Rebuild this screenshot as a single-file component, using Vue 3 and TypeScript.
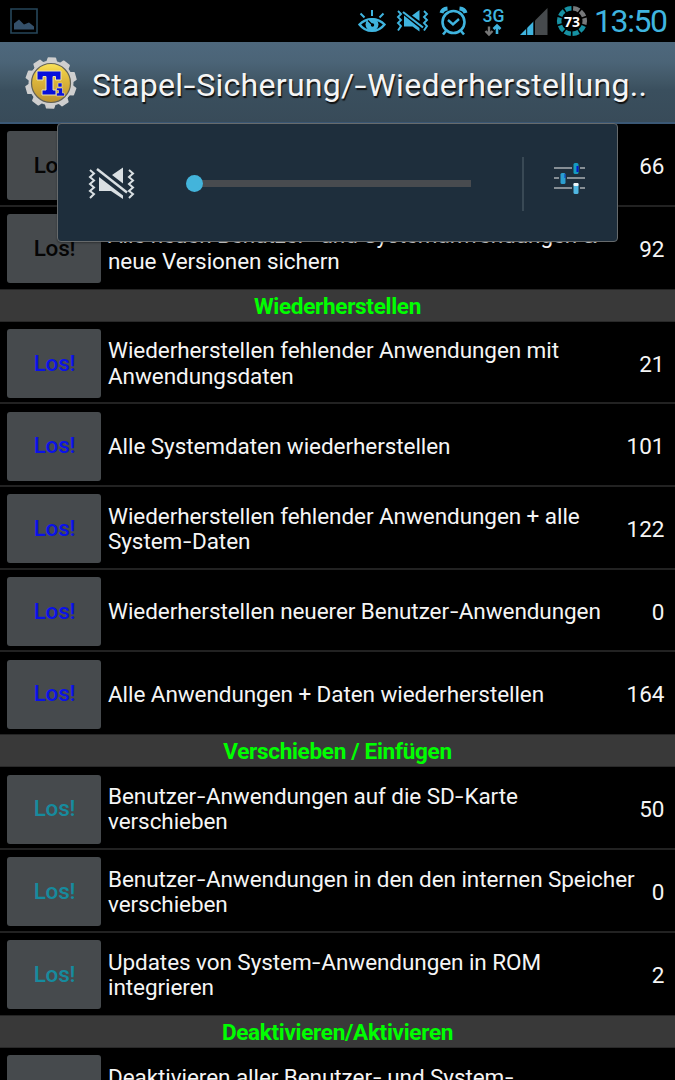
<script setup lang="ts">
interface Item { lines: string[]; count: string; tone: string }
interface Section { title: string; items: Item[] }

const item = (tone: string, count: string, ...lines: string[]): Item => ({ tone, count, lines })

const sections: Section[] = [
  {
    title: '',
    items: [
      item('black', '66', ''),
      item('black', '92', 'Alle neuen Benutzer- und Systemanwendungen &', 'neue Versionen sichern'),
    ],
  },
  {
    title: 'Wiederherstellen',
    items: [
      item('blue', '21', 'Wiederherstellen fehlender Anwendungen mit', 'Anwendungsdaten'),
      item('blue', '101', 'Alle Systemdaten wiederherstellen'),
      item('blue', '122', 'Wiederherstellen fehlender Anwendungen + alle', 'System-Daten'),
      item('blue', '0', 'Wiederherstellen neuerer Benutzer-Anwendungen'),
      item('blue', '164', 'Alle Anwendungen + Daten wiederherstellen'),
    ],
  },
  {
    title: 'Verschieben / Einfügen',
    items: [
      item('teal', '50', 'Benutzer-Anwendungen auf die SD-Karte', 'verschieben'),
      item('teal', '0', 'Benutzer-Anwendungen in den den internen Speicher', 'verschieben'),
      item('teal', '2', 'Updates von System-Anwendungen in ROM', 'integrieren'),
    ],
  },
  {
    title: 'Deaktivieren/Aktivieren',
    items: [item('black', '', 'Deaktivieren aller Benutzer- und System-', 'Anwendungen')],
  },
]

// Split on hyphens so that each one can be drawn wider than the font's own glyph
const pieces = (line: string): string[] => line.split(/(-)/).filter((p) => p !== '')
const teeth = Array.from({ length: 10 }, (_, i) => i * 36 + 2)
const segments = Array.from({ length: 10 }, (_, i) => i)
</script>

<template>
  <div class="screen">
    <header class="status">
      <svg class="picture" width="28" height="26" viewBox="0 0 28 26">
        <path d="M1 1h26v24H1z" fill="none" stroke="#26465a" stroke-width="1.6" />
        <path d="M4 21.500v-6l5-4 5 5 5-2 5 4v3z" fill="#34506a" />
      </svg>
      <svg class="tray" width="325" height="42" viewBox="350 0 325 42">
        <g fill="none" stroke="#3fb4df" stroke-width="2">
          <path d="M359.500 24.500C366 17.500 378 17.500 384.500 24.500C378 33 366 33 359.500 24.500Z" stroke-width="2.400" />
          <path d="M372 10v6M360.500 13.500l4 4M383.500 13.500l-4 4" />
          <circle cx="372" cy="24.500" r="6.500" fill="#3fb4df" stroke="none" />
          <path d="M368 20.500l4 4" stroke="#000" stroke-width="1.300" />
          <circle cx="372.500" cy="25" r="1.700" fill="#000" stroke="none" />
        </g>
        <g fill="none" stroke="#3fb4df" stroke-width="1.900">
          <path d="M398 11l3 3-3 3 3 3-3 3 3 3-3 4.500M424 11l3 3-3 3 3 3-3 3 3 3-3 4.500" />
          <path d="M403 12l20 15.500" stroke-width="2.200" />
          <path d="M419.500 10v11l-7.500-5.500zM404 15.500l15.500 12.500v3.500l-7-5H404z" fill="#3fb4df" stroke="none" />
        </g>
        <g fill="none" stroke="#3fb4df" stroke-width="2.600">
          <circle cx="453.500" cy="22" r="11" />
          <path d="M448 20l5 4.500 6-5.500" stroke-width="2.400" />
          <path d="M441.500 13q1-4 6-4.500M459.500 8.500q5 .5 6 4.500" stroke-width="4" />
          <path d="M446 31l-3 3.500M461 31l3 3.500" />
        </g>
        <text x="482.500" y="22" class="net" textLength="22" lengthAdjust="spacingAndGlyphs">3G</text>
        <path d="M489 26.500v8M485.500 31l3.500 3.500 3.500-3.500" fill="none" stroke="#777" stroke-width="2.400" />
        <path d="M497 34v-8M493.500 29l3.500-3.500 3.500 3.500" fill="none" stroke="#3fb4df" stroke-width="2.600" />
        <path d="M520 35l14-14v14z" fill="#3fb4df" />
        <path d="M535 20.500l12.500-12.500v27H535z" fill="#464a4d" />
        <path d="M526.700 25v10M533.800 19v16" stroke="#000" stroke-width="1" />
        <g fill="none" stroke-width="4.500">
          <circle v-for="n in segments" :key="n" cx="572" cy="21" r="12.800" pathLength="100" stroke-dasharray="8 92" :stroke="n < 3 ? '#77797b' : '#1691a3'" :transform="`rotate(${n * 36 - 85} 572 21)`" />
        </g>
        <text x="572" y="27" class="battery" text-anchor="middle">73</text>
        <text x="594" y="31.500" class="clock" textLength="74" lengthAdjust="spacing">13:50</text>
      </svg>
    </header>

    <div class="titlebar">
      <svg class="logo" width="54" height="54" viewBox="-27 -27 54 54">
        <defs>
          <linearGradient id="gold" x1="0" y1="0" x2="0" y2="1">
            <stop offset="0" stop-color="#f9e35c" />
            <stop offset=".2" stop-color="#eccb43" />
            <stop offset=".5" stop-color="#d9b23a" />
            <stop offset="1" stop-color="#ba9130" />
          </linearGradient>
        </defs>
        <g fill="#cfcfcf" stroke="#cfcfcf" stroke-linejoin="round">
          <path v-for="a in teeth" :key="a" d="M-5-20l1.500-5h7l1.500 5z" :transform="`rotate(${a})`" stroke-width="1.500" />
          <circle r="22" />
        </g>
        <circle r="19.500" fill="url(#gold)" stroke="#626257" stroke-width="1.200" />
        <path d="M-14-12H10V-3H4.500v-3.500H2V7h3v5H-9V7h4V-6.500h-3V-3h-6z" fill="#0810dc" stroke="#eee4ac" stroke-width="1" />
        <path d="M7 0h4v4H7zM5.500 5h6v5h2v3h-8v-3h2V7.500h-2z" fill="#0810dc" stroke="#eee4ac" stroke-width=".6" />
      </svg>
      <h1><span v-for="(p, i) in pieces('Stapel-Sicherung/-Wiederherstellung..')" :key="i" :class="{ hyphen: p === '-' }">{{ p }}</span></h1>
    </div>

    <main>
      <section v-for="section in sections" :key="section.title">
        <h2 v-if="section.title">{{ section.title }}</h2>
        <div v-for="(entry, i) in section.items" :key="i" class="row">
          <button :class="entry.tone">Los!</button>
          <div class="label">
            <div v-for="line in entry.lines" :key="line" class="line"><span v-for="(p, j) in pieces(line)" :key="j" :class="{ hyphen: p === '-' }">{{ p }}</span></div>
          </div>
          <span class="count">{{ entry.count }}</span>
        </div>
      </section>
    </main>

    <div class="volume">
      <svg class="mute" width="48" height="36" viewBox="0 0 48 36">
        <g fill="none" stroke="#d9dfe2" stroke-width="2">
          <path d="M2 4l4 3.500-4 3.500 4 3.500-4 3.500 4 3.500-4 3.500 4 3-4 4M41 4l4 3.500-4 3.500 4 3.500-4 3.500 4 3.500-4 3.500 4 3-4 4" />
          <path d="M9 3l30 23.500" stroke-width="2.400" />
          <path d="M35 1.500v16L24 9zM11 11l24 18.500V33l-12-8H11z" fill="#d9dfe2" stroke="none" />
        </g>
      </svg>
      <div class="slider"><i class="thumb"></i></div>
      <i class="divider"></i>
      <svg class="settings" width="32" height="34" viewBox="0 0 32 34">
        <path d="M0 6h18M26 6h5M0 16h5M13 16h18M0 26h18M26 26h5" stroke="#a9afb3" stroke-width="1.500" />
        <g>
          <rect x="19.500" y="1" width="5" height="11" rx="1.500" fill="#159ac0" />
          <path d="M22.500 4h2v6h-2z" fill="#0717c4" />
          <rect x="6.500" y="11" width="5" height="11" rx="1.500" fill="#2b9ed0" />
          <path d="M10.500 12h1v4h-1z" fill="#0833bd" />
          <rect x="19.500" y="21" width="5" height="11" rx="1.500" fill="#50b7e2" />
          <rect x="19.500" y="21" width="5" height="3" rx="1" fill="#eef5f8" />
        </g>
      </svg>
    </div>
  </div>
</template>

<style scoped>
.screen { position: relative; width: 675px; height: 1080px; overflow: hidden; background: #000; color: #f5f5f5; font-family: Roboto, sans-serif; }
.status { height: 42px; display: flex; justify-content: space-between; }
.picture { margin: 8px 0 0 10px; }
.net { font: 500 18px Roboto, sans-serif; fill: #3fb4df; }
.battery { font: 700 14px "Noto Sans", sans-serif; fill: #fff; }
.clock { font: 400 32px Roboto, sans-serif; fill: #3fb4df; }
.titlebar { box-sizing: border-box; height: 82px; display: flex; align-items: center; padding-left: 24px; background: linear-gradient(#4e687d, #4b6477 25%, #405665 50%, #3a4f5e 60%, #384b59); border-bottom: 2px solid #3b5875; }
.logo { flex: none; margin-top: 2px; }
h1 { margin: 5px 0 0 14px; font-size: 32px; letter-spacing: .3px; line-height: 40px; font-weight: 400; white-space: nowrap; text-shadow: 1px 2px 1px #111; }
.hyphen { display: inline-block; transform: scaleX(1.350); margin: 0 1.800px; }
h2 { box-sizing: border-box; height: 33px; margin: 0; background: #393939; border-top: 1.500px solid #242424; border-bottom: 1px solid #292929; color: #0f0; text-align: center; font-size: 22.500px; letter-spacing: -.3px; line-height: 32px; font-weight: 700; }
.row { box-sizing: border-box; height: 82.700px; display: flex; align-items: center; padding: 3px 10.500px 0 7px; border-bottom: 2px solid #222; }
.row:last-child { height: 82px; padding-top: 2px; border-bottom: 0; }
button { flex: none; width: 94px; height: 69px; padding: 0 0 2px 1px; border: 0; border-radius: 3px; background: #464a4d; font: 500 22.500px Roboto, sans-serif; letter-spacing: -.2px; }
.black { color: #050505; }
.blue { color: #0b12e8; }
.teal { color: #168b9e; }
.label { flex: 1; min-width: 0; margin-left: 7px; font-size: 22.500px; letter-spacing: -.07px; line-height: 25.300px; white-space: nowrap; }
.line { height: 25.300px; }
.count { font-size: 22.500px; }
.volume { position: absolute; left: 57px; top: 123px; box-sizing: border-box; width: 561px; height: 119px; border: 1.500px solid #666a6c; border-radius: 4px; background: #1e2e3c; display: flex; align-items: center; box-shadow: 0 1px 2px rgba(0, 0, 0, .35); }
.mute { flex: none; margin: 2px 0 0 30px; }
.slider { position: relative; width: 277px; height: 7px; margin-left: 58px; margin-top: 2px; background: #484b4f; }
.thumb { position: absolute; left: -8px; top: -5px; width: 17px; height: 17px; border-radius: 50%; background: #43b4db; }
.divider { width: 2px; height: 54px; margin: 2px 0 0 51px; background: #394955; }
.settings { margin-left: 30px; margin-top: -8px; }
</style>
